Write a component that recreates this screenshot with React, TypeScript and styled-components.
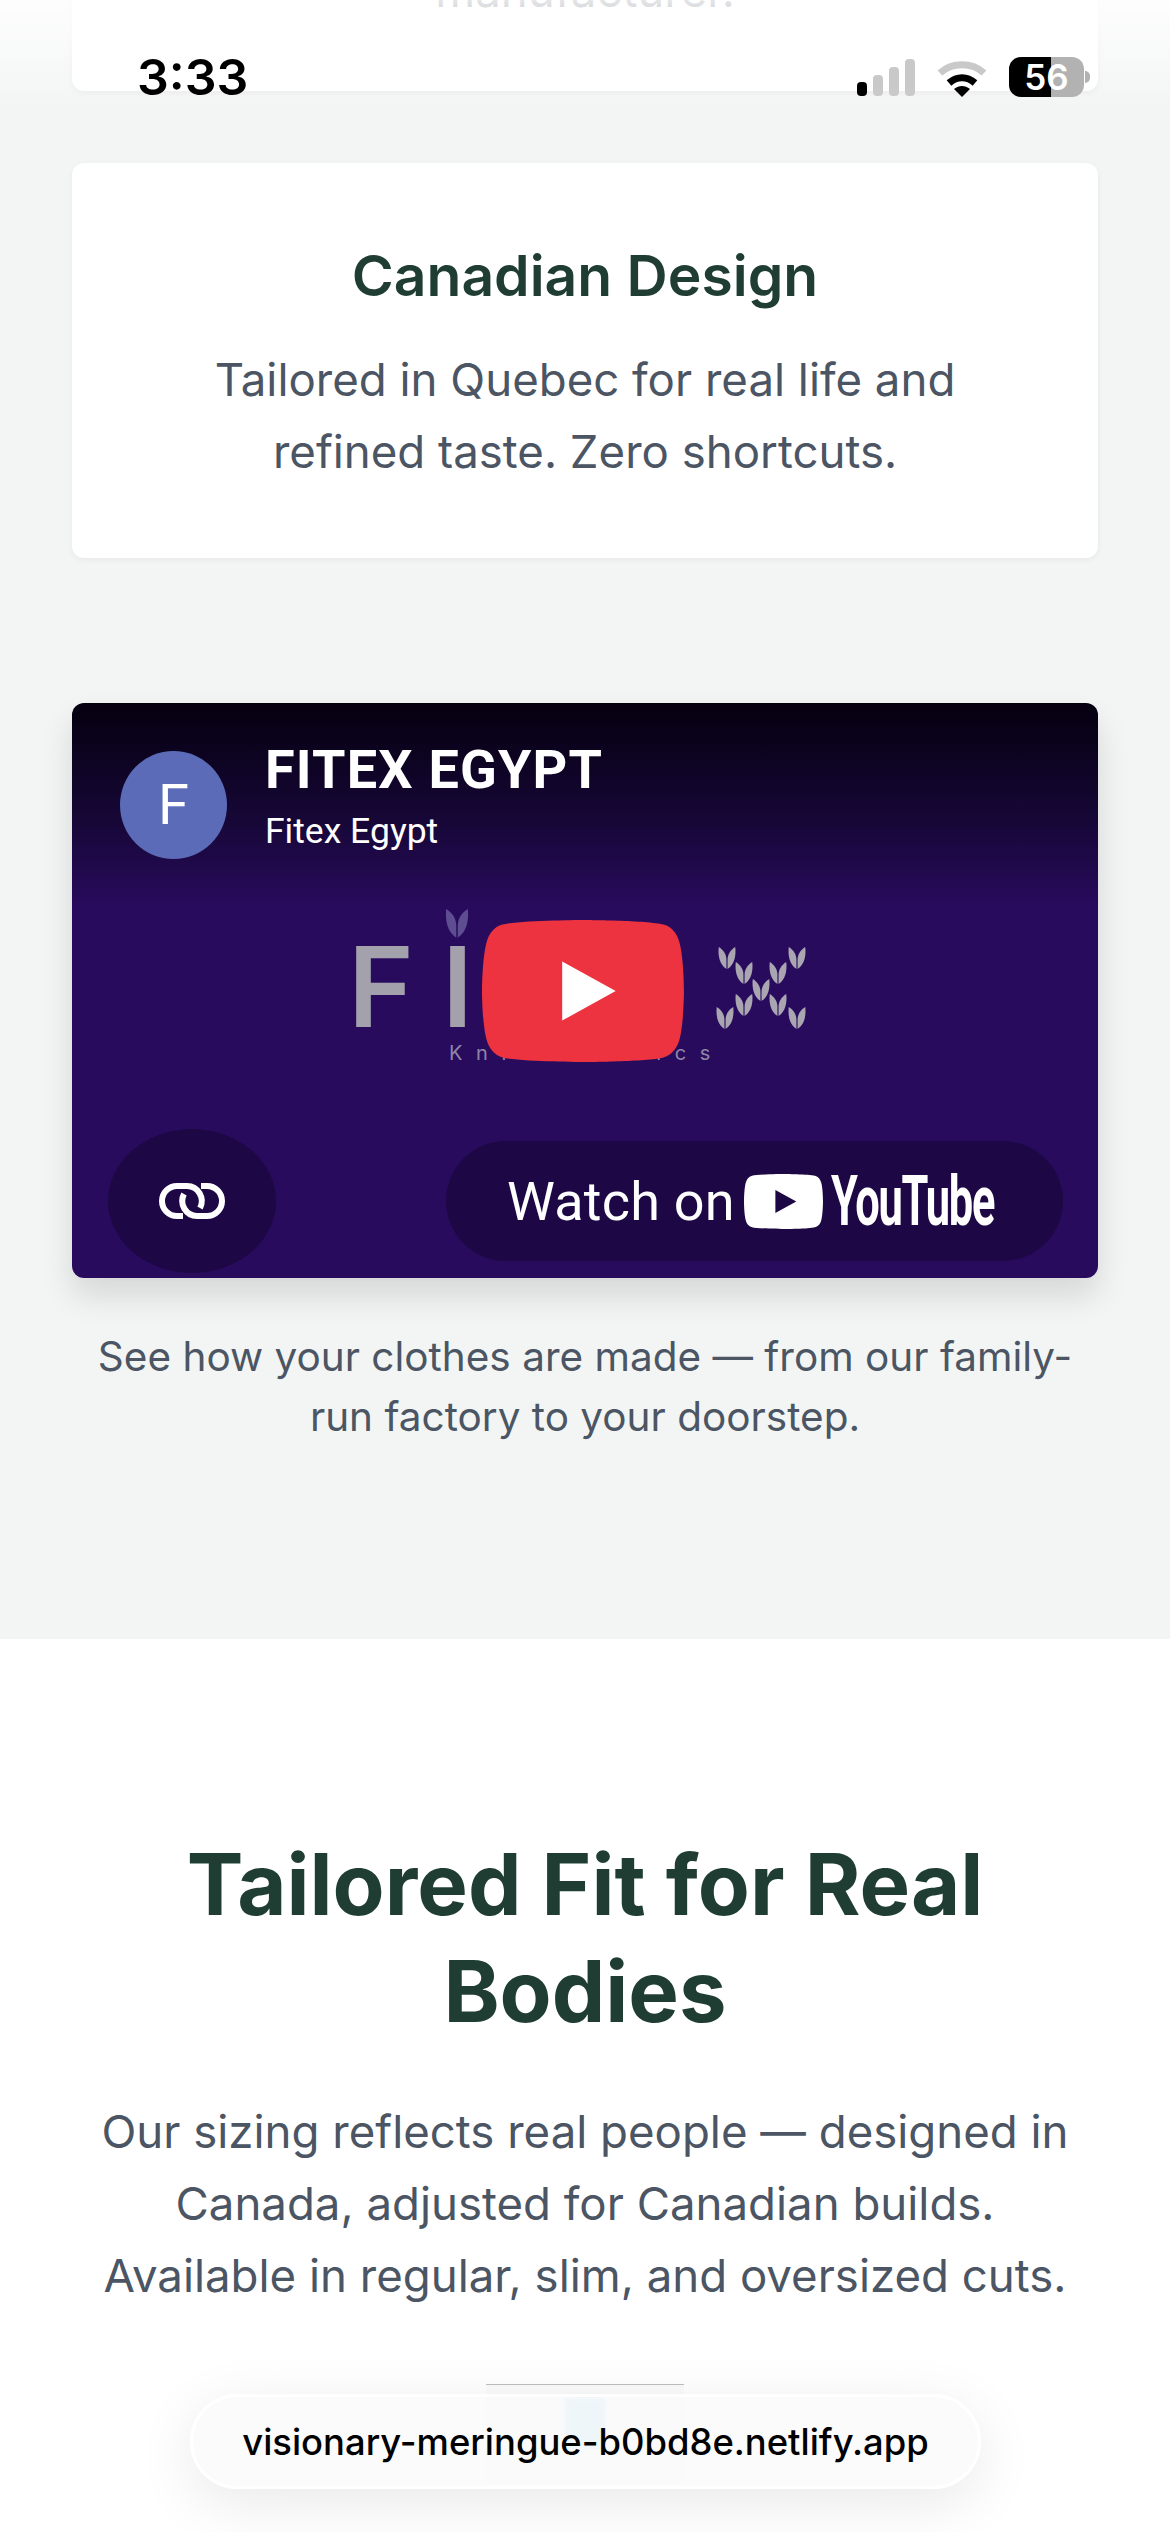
import React from "react"
import styled, { createGlobalStyle } from "styled-components"

const GlobalStyle = createGlobalStyle`
  html, body {
    margin: 0;
    padding: 0;
    background: #fff;
  }
  * {
    box-sizing: border-box;
  }
`

const YT_SHAPE =
  "M66.52,7.74c-0.78-2.93-2.49-5.41-5.42-6.19C55.79,.13,34,0,34,0S12.21,.13,6.9,1.55C3.97,2.33,2.27,4.81,1.48,7.74C0.06,13.05,0,24,0,24s0.06,10.95,1.48,16.26c0.78,2.93,2.49,5.41,5.42,6.19C12.21,47.87,34,48,34,48s21.79-0.13,27.1-1.55c2.93-0.78,4.64-3.26,5.42-6.19C67.94,34.95,68,24,68,24S67.94,13.05,66.52,7.74z"

const Page = styled.div`
  position: relative;
  width: 1170px;
  height: 2532px;
  overflow: hidden;
  font-family: Inter, "Liberation Sans", sans-serif;
`

const GraySection = styled.section`
  background: #f3f5f4;
  padding: 0 72px 192px;
`

const WhiteSection = styled.section`
  background: #fff;
  padding: 192px 72px 0;
  text-align: center;
`

const Card = styled.div`
  background: #fff;
  border-radius: 12px;
  box-shadow: 0 2px 6px rgba(0, 0, 0, 0.05);
  text-align: center;
`

const ClippedCard = styled(Card)`
  height: 151px;
  margin-top: -60px;
  margin-bottom: 72px;
  padding-top: 15px;
`

const ClippedText = styled.p`
  margin: 0;
  font-size: 45.6px;
  line-height: 72px;
  color: #4b5563;
`

const DesignCard = styled(Card)`
  height: 395px;
  margin-bottom: 145px;
  padding-top: 85px;
`

const CardTitle = styled.h3`
  margin: 0 0 40px;
  font-size: 57px;
  line-height: 56px;
  font-weight: 600;
  color: #1f3d33;
`

const CardText = styled.p`
  margin: 0;
  font-size: 45.6px;
  line-height: 72px;
  color: #4b5563;
`

const Video = styled.div`
  position: relative;
  height: 575px;
  border-radius: 12px;
  overflow: hidden;
  display: flex;
  flex-direction: column;
  justify-content: space-between;
  padding: 48px 35px 5px 36px;
  background: linear-gradient(#05000f 0%, #160736 20%, #290b5e 36%, #290b5e 100%);
  box-shadow: 0 18px 32px rgba(0, 0, 0, 0.12);
  font-family: Roboto, "Liberation Sans", sans-serif;
  color: #fff;
`

const VideoHeader = styled.div`
  display: flex;
  align-items: flex-start;
  gap: 38px;
  padding-left: 12px;
`

const Avatar = styled.div`
  width: 107px;
  height: 108px;
  border-radius: 50%;
  background: #5c6bb8;
  display: flex;
  align-items: center;
  justify-content: center;
  font-size: 56px;
`

const Channel = styled.div`
  display: flex;
  flex-direction: column;
  gap: 11px;
  margin-top: -11px;
`

const ChannelName = styled.div`
  font-size: 54px;
  line-height: 60px;
  font-weight: 700;
  letter-spacing: 1.2px;
`

const ChannelSub = styled.div`
  font-size: 35.5px;
  line-height: 40px;
`

const Logo = styled.div`
  position: absolute;
  left: 0;
  right: 0;
  top: 200px;
  height: 160px;
`

const LogoLetter = styled.span<{ $left: number }>`
  position: absolute;
  left: ${(p) => p.$left}px;
  top: 27px;
  font-family: Inter, sans-serif;
  font-size: 112px;
  line-height: 112px;
  font-weight: 600;
  color: #a3a1ab;
`

const LogoTag = styled.span`
  position: absolute;
  left: 377px;
  top: 138px;
  font-family: Inter, sans-serif;
  font-size: 20px;
  line-height: 24px;
  letter-spacing: 13.6px;
  white-space: nowrap;
  color: #8e86a8;
`

const LogoLeaves = styled.svg`
  position: absolute;
  left: 370px;
  top: 0;
`

const PlayButton = styled.svg`
  position: absolute;
  left: 410px;
  top: 217px;
  width: 202px;
  height: 142px;
`

const VideoFooter = styled.div`
  display: flex;
  align-items: center;
  justify-content: space-between;
`

const LinkButton = styled.div`
  width: 168px;
  height: 144px;
  border-radius: 50%;
  background: #1d0845;
  display: flex;
  align-items: center;
  justify-content: center;
`

const WatchPill = styled.div`
  width: 617px;
  height: 120px;
  border-radius: 60px;
  background: #1d0845;
  display: flex;
  align-items: center;
  padding-left: 61px;
`

const WatchText = styled.span`
  font-size: 54px;
  letter-spacing: 0.2px;
  margin-right: 9px;
`

const WordMark = styled.span`
  display: inline-block;
  width: 162px;
  margin-left: 8px;
  font-family: Roboto, sans-serif;
  font-size: 70px;
  line-height: 68px;
  font-weight: 700;
  letter-spacing: -2px;
  white-space: nowrap;
  transform: scaleX(0.62);
  transform-origin: left center;
`

const Caption = styled.p`
  margin: 49px 0 0;
  text-align: center;
  font-size: 40.5px;
  line-height: 60px;
  color: #4b5563;
`

const Heading = styled.h2`
  margin: 0 0 51px;
  font-size: 85px;
  line-height: 107px;
  font-weight: 700;
  color: #1f3d33;
`

const Body = styled.p`
  margin: 0;
  padding: 0 20px;
  font-size: 45.6px;
  line-height: 72px;
  color: #4b5563;
`

const Figure = styled.div`
  width: 198px;
  height: 100px;
  margin: 72px auto 0;
  border-top: 1px solid #bdbdbd;
  background: #fbfbfb;
  display: flex;
  justify-content: center;
  padding-top: 12px;
`

const FigureStripe = styled.div`
  width: 40px;
  height: 52px;
  background: #c4e3fb;
  filter: blur(2px);
`

const StatusBar = styled.div`
  position: absolute;
  top: 0;
  left: 0;
  right: 0;
  height: 110px;
  background: linear-gradient(rgba(255, 255, 255, 0.85), rgba(255, 255, 255, 0));
  display: flex;
  align-items: flex-start;
  justify-content: space-between;
  padding: 48px 86px 0 137px;
`

const Time = styled.div`
  font-size: 50px;
  line-height: 58px;
  font-weight: 600;
  color: #000;
`

const StatusIcons = styled.div`
  display: flex;
  align-items: flex-end;
  gap: 22px;
  padding-top: 9px;
`

const SignalBars = styled.div`
  display: flex;
  align-items: flex-end;
  gap: 6px;
  margin-bottom: 1px;
`

const SignalBar = styled.div<{ $height: number; $on?: boolean }>`
  width: 10px;
  height: ${(p) => p.$height}px;
  border-radius: 4px;
  background: ${(p) => (p.$on ? "#000" : "#c9c9c9")};
`

const Battery = styled.div`
  position: relative;
  width: 75px;
  height: 40px;
  border-radius: 12px;
  display: flex;
  align-items: center;
  justify-content: center;
  font-size: 35px;
  font-weight: 600;
  color: #fff;
`

const BatteryNub = styled.div`
  position: absolute;
  right: -6px;
  top: 14px;
  width: 5px;
  height: 12px;
  border-radius: 0 6px 6px 0;
  background: #b2b2b2;
`

const UrlPill = styled.div`
  position: absolute;
  left: 190px;
  top: 2394px;
  width: 791px;
  height: 95px;
  border-radius: 48px;
  border: 3px solid #fff;
  background: rgba(250, 250, 250, 0.8);
  box-shadow: 0 14px 60px rgba(0, 0, 0, 0.09);
  display: flex;
  align-items: center;
  justify-content: center;
  font-size: 36.4px;
  font-weight: 500;
  color: #000;
`

const leaves = [
  [398, 0],
  [468, 0],
  [415, 15],
  [449, 15],
  [432, 32],
  [415, 47],
  [449, 47],
  [396, 60],
  [468, 60],
]

const Leaf = ({ x, y, fill, size = 1 }: { x: number; y: number; fill: string; size?: number }) => (
  <g transform={`translate(${x} ${y}) scale(${size})`} fill={fill}>
    <path d="M-0.6 24C-8 19-10 10-9 0-4 3-0.6 8-0.6 14z" />
    <path d="M0.6 24C8 19 10 10 9 0 4 3 0.6 8 0.6 14z" />
  </g>
)

const App = () => {
  const batteryLevel = 56

  return (
    <>
      <GlobalStyle />
      <Page>
        <GraySection>
          <ClippedCard>
            <ClippedText>manufacturer.</ClippedText>
          </ClippedCard>
          <DesignCard>
            <CardTitle>Canadian Design</CardTitle>
            <CardText>
              Tailored in Quebec for real life and
              <br />
              refined taste. Zero shortcuts.
            </CardText>
          </DesignCard>
          <Video>
            <VideoHeader>
              <Avatar>F</Avatar>
              <Channel>
                <ChannelName>FITEX EGYPT</ChannelName>
                <ChannelSub>Fitex Egypt</ChannelSub>
              </Channel>
            </VideoHeader>
            <Logo>
              <LogoLetter $left={276}>F</LogoLetter>
              <LogoLetter $left={370}>I</LogoLetter>
              <LogoTag>Knit Fabrics</LogoTag>
              <LogoLeaves width="460" height="130" viewBox="370 0 460 130">
                <Leaf x={385} y={6} fill="#5f4d91" size={1.2} />
                {leaves.map(([x, y], i) => (
                  <Leaf key={i} x={x + 257} y={y + 44} fill="#a9a6b1" size={0.92} />
                ))}
              </LogoLeaves>
            </Logo>
            <PlayButton viewBox="0 0 68 48" preserveAspectRatio="none">
              <path d={YT_SHAPE} fill="#ee3340" />
              <path d="M45 24 27 14v20z" fill="#fff" />
            </PlayButton>
            <VideoFooter>
              <LinkButton>
                <svg width="66" height="36" viewBox="0 0 66 36" fill="none" stroke="#fff" strokeWidth="6">
                  <path d="M24 33h-6a15 15 0 0 1 0-30h10a15 15 0 0 1 13 22" />
                  <path d="M42 3h6a15 15 0 0 1 0 30H38a15 15 0 0 1-13-22" />
                </svg>
              </LinkButton>
              <WatchPill>
                <WatchText>Watch on</WatchText>
                <svg width="79" height="55" viewBox="0 0 68 48" preserveAspectRatio="none">
                  <path d={YT_SHAPE} fill="#fff" />
                  <path d="M45 24 27 14v20z" fill="#1d0845" />
                </svg>
                <WordMark>YouTube</WordMark>
              </WatchPill>
            </VideoFooter>
          </Video>
          <Caption>
            See how your clothes are made — from our family-run factory to your doorstep.
          </Caption>
        </GraySection>
        <WhiteSection>
          <Heading>Tailored Fit for Real Bodies</Heading>
          <Body>
            Our sizing reflects real people — designed in Canada, adjusted for Canadian builds.
            Available in regular, slim, and oversized cuts.
          </Body>
          <Figure>
            <FigureStripe />
          </Figure>
        </WhiteSection>

        <StatusBar>
          <Time>3:33</Time>
          <StatusIcons>
            <SignalBars>
              <SignalBar $height={14} $on />
              <SignalBar $height={21} />
              <SignalBar $height={29} />
              <SignalBar $height={37} />
            </SignalBars>
            <svg width="50" height="38" viewBox="0 0 50 38" fill="none">
              <path d="M3 14C15 3 35 3 47 14" stroke="#c9c9c9" strokeWidth="7" />
              <path d="M12 24c8-7 18-7 26 0" stroke="#000" strokeWidth="7" />
              <path d="M17 30c5-4 11-4 16 0l-8 8z" fill="#000" />
            </svg>
            <Battery
              style={{
                background: `linear-gradient(90deg, #000 ${batteryLevel}%, #b2b2b2 ${batteryLevel}%)`,
              }}
            >
              56
              <BatteryNub />
            </Battery>
          </StatusIcons>
        </StatusBar>
        <UrlPill>visionary-meringue-b0bd8e.netlify.app</UrlPill>
      </Page>
    </>
  )
}

export default App
